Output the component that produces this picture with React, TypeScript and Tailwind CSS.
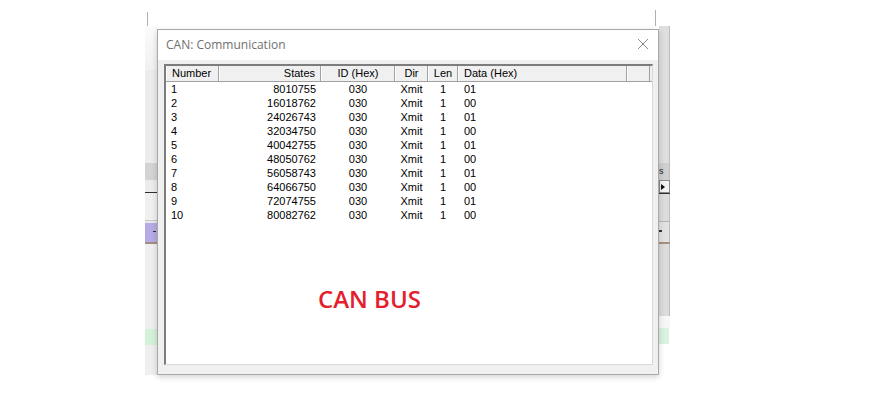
import React from 'react';

const rows = [
  ['1', '8010755', '01'],
  ['2', '16018762', '00'],
  ['3', '24026743', '01'],
  ['4', '32034750', '00'],
  ['5', '40042755', '01'],
  ['6', '48050762', '00'],
  ['7', '56058743', '01'],
  ['8', '64066750', '00'],
  ['9', '72074755', '01'],
  ['10', '80082762', '00'],
];

function HeaderCell({ w, align, children }: { w: string; align: string; children?: React.ReactNode }) {
  return (
    <div className={`${w} ${align} h-full border-l border-l-white border-r border-r-[#a0a0a0] flex items-center px-[5px] overflow-hidden whitespace-nowrap`}>
      {children}
    </div>
  );
}

function LeftStrip() {
  return (
    <div className="flex flex-col w-[12px] h-full">
      <div className="h-[44px] bg-gradient-to-b from-[#fbfbfb] to-[#f1f1f1]" />
      <div className="h-[93px] bg-[#ececec]" />
      <div className="h-[17px] bg-[#d3d3d3]" />
      <div className="h-[12px] bg-[#ececec]" />
      <div className="h-px bg-[#2f2f2f]" />
      <div className="h-[27px] bg-[#f0f0f0]" />
      <div className="h-px bg-[#c9c9c9]" />
      <div className="h-[2px] bg-[#e8e8e8]" />
      <div className="h-[19px] bg-[#b7abe5] flex items-center justify-end pr-[1px]">
        <span className="block w-[3px] h-px bg-[#333] mb-[2px]" />
      </div>
      <div className="h-[2px] bg-[#a48f82]" />
      <div className="h-[85px] bg-[#efefef]" />
      <div className="h-[16px] bg-[#d4f2da]" />
      <div className="flex-1 bg-[#efefef]" />
    </div>
  );
}

function RightStrip() {
  return (
    <div className="flex flex-col w-[11px] h-full">
      <div className="h-[137px] bg-[#dedede] border-r border-r-[#bdbdbd]" />
      <div className="h-[17px] bg-[#cfcfcf] border-r border-r-[#bdbdbd] text-[9px] leading-[17px] text-[#222] font-['Liberation_Sans',sans-serif]">s</div>
      <div className="h-[13px] bg-[#f3f3f3] border border-[#8a8a8a] flex items-center justify-start pl-[1px]">
        <span className="block w-0 h-0 border-y-[3px] border-y-transparent border-l-[4px] border-l-[#111]" />
      </div>
      <div className="h-px bg-[#2f2f2f]" />
      <div className="h-[27px] bg-[#dcdcdc] border-r border-r-[#bdbdbd]" />
      <div className="h-px bg-[#b5b5b5]" />
      <div className="h-[20px] bg-[#e2e2e2] border-r border-r-[#bdbdbd] flex items-center">
        <span className="block w-[3px] h-[2px] bg-[#333] mb-[3px]" />
      </div>
      <div className="h-[2px] bg-[#a48f82]" />
      <div className="h-[72px] bg-[#dcdcdc] border-r border-r-[#bdbdbd]" />
      <div className="h-[12px] bg-[#f7f7f7]" />
      <div className="h-[16px] bg-[#d9f3de] w-[10px]" />
      <div className="flex-1 bg-white" />
    </div>
  );
}

export default function App() {
  return (
    <div className="relative w-[885px] h-[409px] bg-white overflow-hidden font-['Liberation_Sans',Arial,sans-serif]">
      {/* ticks from the window behind */}
      <div className="absolute left-[147px] top-[12px] w-px h-[14px] bg-[#b0b0b0]" />
      <div className="absolute left-[655px] top-[10px] w-px h-[16px] bg-[#b0b0b0]" />

      {/* application window behind the dialog */}
      <div className="absolute left-[145px] top-[26px] w-[525px] h-[349px] flex justify-between">
        <LeftStrip />
        <RightStrip />
      </div>

      {/* dialog */}
      <div className="absolute left-[157px] top-[29px] w-[502px] h-[346px] border border-[#a9a9a9] bg-[#f0f0f0] shadow-[0_2px_6px_rgba(0,0,0,0.18)] flex flex-col">
        <div className="h-[30px] shrink-0 bg-white flex items-center justify-between pl-[8px] pr-[9px]">
          <span className="text-[12px] text-[#707070] font-['Open_Sans',sans-serif] leading-none">CAN: Communication</span>
          <svg width="12" height="12" viewBox="0 0 12 12" className="mt-[-2px]">
            <path d="M1 1 L11 11 M11 1 L1 11" stroke="#8c8c8c" strokeWidth="1" fill="none" />
          </svg>
        </div>

        <div className="flex-1 pt-[4px] pl-[6px] pr-[5px] pb-[9px] flex">
          <div className="flex-1 bg-white border-l-2 border-t-2 border-l-[#7d7d7d] border-t-[#7d7d7d] border-r border-b border-r-[#d9d9d9] border-b-[#d9d9d9] flex flex-col text-[11px] text-black">
            <div className="h-[16px] shrink-0 bg-[#f0f0f0] border-b border-b-[#a0a0a0] flex">
              <HeaderCell w="w-[53px]" align="justify-start">Number</HeaderCell>
              <HeaderCell w="w-[102px]" align="justify-end">States</HeaderCell>
              <HeaderCell w="w-[74px]" align="justify-center">ID (Hex)</HeaderCell>
              <HeaderCell w="w-[33px]" align="justify-center">Dir</HeaderCell>
              <HeaderCell w="w-[30px]" align="justify-center">Len</HeaderCell>
              <HeaderCell w="w-[169px]" align="justify-start">Data (Hex)</HeaderCell>
              <HeaderCell w="w-[23px]" align="justify-start" />
            </div>

            <div className="flex flex-col">
              {rows.map(([n, s, d]) => (
                <div key={n} className="flex h-[14px] leading-[14px]">
                  <div className="w-[53px] pl-[5px]">{n}</div>
                  <div className="w-[102px] text-right pr-[5px]">{s}</div>
                  <div className="w-[74px] text-center">030</div>
                  <div className="w-[33px] text-center">Xmit</div>
                  <div className="w-[30px] text-center">1</div>
                  <div className="w-[169px] pl-[6px]">{d}</div>
                </div>
              ))}
            </div>

            <div className="mt-[62px] pl-[152px]">
              <span className="text-[24px] leading-[30px] font-semibold text-[#e3202c] font-['Open_Sans',sans-serif]">CAN BUS</span>
            </div>
          </div>
        </div>
      </div>
    </div>
  );
}
